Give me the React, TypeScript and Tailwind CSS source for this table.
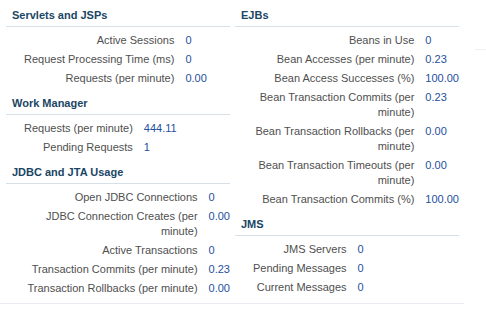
type Metric = { label: string; value: string };

type Section = { title: string; rows: Metric[] };

const leftSections: Section[] = [
  {
    title: "Servlets and JSPs",
    rows: [
      { label: "Active Sessions", value: "0" },
      { label: "Request Processing Time (ms)", value: "0" },
      { label: "Requests (per minute)", value: "0.00" },
    ],
  },
  {
    title: "Work Manager",
    rows: [
      { label: "Requests (per minute)", value: "444.11" },
      { label: "Pending Requests", value: "1" },
    ],
  },
  {
    title: "JDBC and JTA Usage",
    rows: [
      { label: "Open JDBC Connections", value: "0" },
      { label: "JDBC Connection Creates (per minute)", value: "0.00" },
      { label: "Active Transactions", value: "0" },
      { label: "Transaction Commits (per minute)", value: "0.23" },
      { label: "Transaction Rollbacks (per minute)", value: "0.00" },
    ],
  },
];

const rightSections: Section[] = [
  {
    title: "EJBs",
    rows: [
      { label: "Beans in Use", value: "0" },
      { label: "Bean Accesses (per minute)", value: "0.23" },
      { label: "Bean Access Successes (%)", value: "100.00" },
      { label: "Bean Transaction Commits (per minute)", value: "0.23" },
      { label: "Bean Transaction Rollbacks (per minute)", value: "0.00" },
      { label: "Bean Transaction Timeouts (per minute)", value: "0.00" },
      { label: "Bean Transaction Commits (%)", value: "100.00" },
    ],
  },
  {
    title: "JMS",
    rows: [
      { label: "JMS Servers", value: "0" },
      { label: "Pending Messages", value: "0" },
      { label: "Current Messages", value: "0" },
    ],
  },
];

function SectionBlock({ section }: { section: Section }) {
  return (
    <div>
      <h3 className="pl-[6px] pt-[7px] pb-[3px] text-[11px] leading-[16px] font-bold text-[#1a4664] border-b border-[#d6e0e9]">
        {section.title}
      </h3>
      <div className="pl-[18px] mt-[4px]">
        <table>
          <tbody>
            {section.rows.map((row) => (
              <tr key={row.label}>
                <td className="align-top text-right pr-[5px] py-[2px] text-[#4f4f4f]">
                  {row.label}
                </td>
                <td className="align-top text-left pl-[6px] py-[2px] text-[#24509e]">
                  {row.value}
                </td>
              </tr>
            ))}
          </tbody>
        </table>
      </div>
    </div>
  );
}

export default function App() {
  return (
    <div className="flex items-start bg-white w-[486px] h-[309px] font-['Liberation_Sans',Arial,sans-serif] text-[11px] leading-[15px]">
      <div className="flex items-start gap-[5px] w-[464px] pl-[6px] pr-[5px] pb-[5px] border-b border-[#ecebf5]">
        <div className="w-[224px]">
          {leftSections.map((s) => (
            <SectionBlock key={s.title} section={s} />
          ))}
        </div>
        <div className="w-[224px]">
          {rightSections.map((s) => (
            <SectionBlock key={s.title} section={s} />
          ))}
        </div>
      </div>
      <div className="ml-[11px] flex-1 h-[50px] border-b border-[#eef0f4]" />
    </div>
  );
}
